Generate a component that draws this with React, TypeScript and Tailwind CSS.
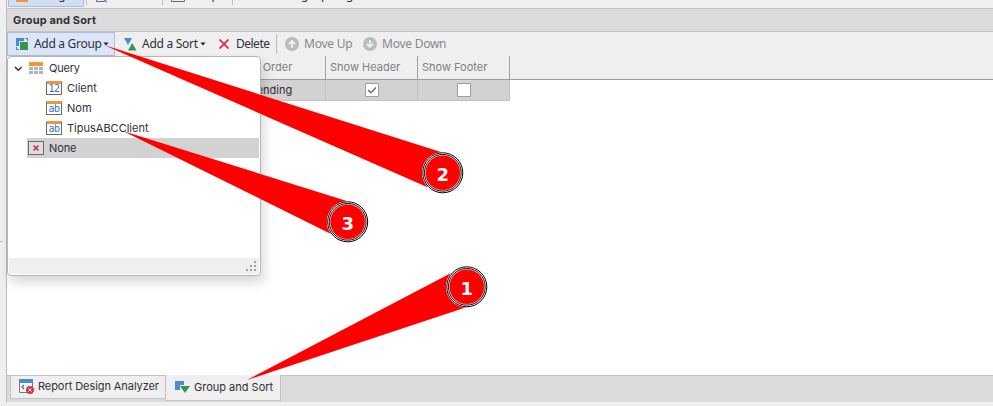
import React from "react";

function GroupIcon() {
  return (
    <svg width="13" height="13" viewBox="0 0 13 13" shapeRendering="crispEdges">
      <path d="M0 0h8v3H3v5H0z" fill="#4a8bd0" />
      <path d="M9 0h3v3h-1V1H9zM0 9h1v2h2v1H0z" fill="#777780" />
      <rect x="4" y="4" width="8" height="8" fill="#35964f" />
    </svg>
  );
}

function TableIcon() {
  return (
    <svg width="15" height="12" viewBox="0 0 15 12" shapeRendering="crispEdges">
      <rect width="14" height="4" fill="#f3953b" />
      <path d="M0 5h4v3H0zM5 5h4v3H5zM10 5h4v3h-4zM0 9h4v3H0zM5 9h4v3H5zM10 9h4v3h-4z" fill="#b3b3b8" />
    </svg>
  );
}

function FieldIcon({ label }: { label: string }) {
  return (
    <span className="flex h-[14px] w-4 shrink-0 items-center justify-center border border-t-[3px] border-[#6b6b76] border-t-[#f3953b] bg-white font-['DejaVu_Sans_Mono',monospace] text-[10px] leading-none tracking-[-0.5px] text-[#3474be]">
      {label}
    </span>
  );
}

function Move({ down = false }: { down?: boolean }) {
  return (
    <svg width="14" height="14" viewBox="0 0 14 14">
      <circle cx="7" cy="7" r="7" fill="#bcbcbc" />
      <path d="M7 11V4M3.8 7.2 7 4l3.2 3.2" fill="none" stroke="#f2f2f2" strokeWidth="1.8" transform={down ? "rotate(180 7 7)" : undefined} />
    </svg>
  );
}

function Callout({ x, y, n }: { x: number; y: number; n: string }) {
  return (
    <g>
      <circle cx={x} cy={y} r="20.9" fill="#fff" />
      <circle cx={x} cy={y} r="20" fill="#fff" stroke="#000" strokeWidth="1" />
      <circle cx={x} cy={y} r="17.7" fill="red" stroke="#ffc8c8" strokeWidth="0.8" />
      <circle cx={x} cy={y} r="18.4" fill="none" stroke="#000" strokeWidth="0.9" />
      <text x={x} y={y + 7.7} textAnchor="middle" fill="#fff" className="font-['DejaVu_Sans',sans-serif] text-[18px] font-bold">{n}</text>
    </g>
  );
}

const fields = [
  { icon: "12", name: "Client" },
  { icon: "ab", name: "Nom" },
  { icon: "ab", name: "TipusABCClient" },
];

function GroupMenu() {
  return (
    <div className="absolute left-[7px] top-[56px] flex h-[220px] w-[254px] flex-col rounded-[4px] border border-[#b5b5b5] bg-white p-px text-[11px] text-[#303038] shadow-[3px_7px_12px_rgba(0,0,0,0.15)]">
      <div className="flex h-5 items-center pl-[5px]">
        <svg width="9" height="6" viewBox="0 0 9 6" className="mr-[6px] mt-px"><path d="m1 1 3.3 3.3L7.6 1" fill="none" stroke="#333" strokeWidth="1.5" /></svg>
        <TableIcon />
        <span className="ml-[5px] tracking-[-0.2px]">Query</span>
      </div>
      {fields.map((f) => (
        <div key={f.name} className="flex h-5 items-center pl-[37px]">
          <FieldIcon label={f.icon} />
          <span className="ml-[5px]">{f.name}</span>
        </div>
      ))}
      <div className="ml-[18px] flex h-5 items-center bg-[#d2d2d2] pl-px">
        <svg width="16" height="14" viewBox="0 0 16 14">
          <rect x=".5" y=".5" width="15" height="13" fill="#dedee0" stroke="#6b6b76" />
          <path d="m5.5 4.5 5 5m0-5-5 5" stroke="#d1344b" strokeWidth="1.7" />
        </svg>
        <span className="ml-[5px] tracking-[-0.1px]">None</span>
      </div>
      <div className="mt-auto flex h-4 items-end justify-end bg-[#efefef] pb-[3px] pr-[2px]">
        <svg width="11" height="10" viewBox="0 0 11 10" fill="#a0a0a0" shapeRendering="crispEdges">
          <path d="M8 0h2v2H8zM4 4h2v2H4zM8 4h2v2H8zM0 8h2v2H0zM4 8h2v2H4zM8 8h2v2H8z" />
        </svg>
      </div>
    </div>
  );
}

function RibbonEdge() {
  return (
    <svg width="400" height="8" viewBox="7 0 400 8" className="block" fill="#303038">
      <path d="M8.5-1v7.5h75V-1" fill="#d0dff6" stroke="#aebcd8" />
      <path d="M16 0h12v2H16z" fill="#f3953b" />
      <path d="M86.5 0v5M162.5 0v5M232.5 0v5" stroke="#c0c0c0" />
      <path d="M96.5-1v2.5h8M171.5-1v2.5h13V-1" fill="none" stroke="#6b6b76" />
      <path d="m104 0 3 2" stroke="#4a8bd0" strokeWidth="1.5" />
      <g className="font-['Noto_Sans',sans-serif] text-[12px]">
        <text x="34" y="-1">Design</text>
        <text x="191" y="-1">Script</text>
        <text x="301" y="-1">g</text>
        <text x="321" y="-1">p</text>
        <text x="346" y="-1">g</text>
      </g>
    </svg>
  );
}

export default function App() {
  return (
    <div className="relative h-[406px] w-[993px] overflow-hidden bg-[#efefef] pl-[6px] font-['Inter',sans-serif] text-[#303038]">
      <div className="flex h-[402px] flex-col border-l border-[#bcbcbc]">
        <div className="h-2 shrink-0 overflow-hidden">
          <RibbonEdge />
        </div>
        <div className="flex h-6 shrink-0 items-center border-y border-[#c4c4c4] bg-[#dbdbdb] pl-[6px] text-[11px] font-bold tracking-[0.15px]">Group and Sort</div>
        <div className="flex h-6 shrink-0 items-center font-['Noto_Sans',sans-serif] text-[12px] leading-none">
          <div className="flex h-6 w-[108px] items-center border border-[#aebcd8] bg-[#dbe6f9] pl-2">
            <GroupIcon />
            <span className="ml-[5px] w-[69px] whitespace-nowrap tracking-[-0.3px]">Add a Group</span>
            <svg width="6" height="4" viewBox="0 0 6 4"><path d="M.5.5h5L3 3.5z" fill="#222" /></svg>
          </div>
          <div className="ml-[9px] flex w-[95px] items-center">
            <svg width="13" height="13" viewBox="0 0 13 13"><path d="M0 0h8L4 7z" fill="#4a8bd0" /><path d="M4 12.5h8.5L8.2 5z" fill="#35964f" /></svg>
            <span className="ml-[5px] w-[58px] whitespace-nowrap tracking-[-0.27px]">Add a Sort</span>
            <svg width="6" height="4" viewBox="0 0 6 4"><path d="M.5.5h5L3 3.5z" fill="#222" /></svg>
          </div>
          <svg width="10" height="10" viewBox="0 0 10 10"><path d="m.5.5 9 9m0-9-9 9" stroke="#d1344b" strokeWidth="1.9" /></svg>
          <span className="ml-[7px] w-[40px] tracking-[-0.5px]">Delete</span>
          <span className="h-5 w-px bg-[#bcbcbc]" />
          <div className="ml-2 flex w-[78px] items-center text-[#88888c]"><Move /><span className="ml-[5px] whitespace-nowrap tracking-[-0.25px]">Move Up</span></div>
          <div className="flex items-center text-[#88888c]"><Move down /><span className="ml-[5px] whitespace-nowrap tracking-[-0.25px]">Move Down</span></div>
        </div>
        <div className="flex h-6 shrink-0 border-b border-[#9c9c9c] text-[11px] text-[#808084]">
          <div className="w-[227px] border-r border-[#a0a0a0]" />
          <div className="flex w-[92px] items-center border-r border-[#a0a0a0] pl-[4px]">Sort Order</div>
          <div className="flex w-[92px] items-center border-r border-[#a0a0a0] pl-[4px]">Show Header</div>
          <div className="flex w-[92px] items-center border-r border-[#a0a0a0] pl-[4px]">Show Footer</div>
        </div>
        <div className="min-h-0 flex-1 bg-white">
          <div className="flex h-[21px] w-[503px] border-b border-[#c2c2c2] bg-[#d2d2d2] text-[11px]">
            <div className="w-[227px] border-r border-[#c2c2c2]" />
            <div className="flex w-[92px] items-center border-r border-[#c2c2c2] pl-[3px]">Ascending</div>
            <div className="flex w-[92px] items-center justify-center border-r border-[#c2c2c2]">
              <svg width="14" height="14" viewBox="0 0 14 14"><path d="M.5.5h13v13H.5z" fill="#fff" stroke="#a0a0a0" /><path d="m3 7 2.8 2.8L11 4.6" fill="none" stroke="#666" strokeWidth="1.4" /></svg>
            </div>
            <div className="flex w-[92px] items-center justify-center border-r border-[#c2c2c2]">
              <div className="h-[14px] w-[14px] border border-[#a0a0a0] bg-white" />
            </div>
          </div>
        </div>
        <div className="flex h-[27px] shrink-0 border-t border-[#c2c2c2] bg-[#dbdbdb] pl-[3px] text-[11px]">
          <div className="flex h-[23px] w-[156px] items-center border border-t-0 border-[#c2c2c2] bg-[#efefef] pl-2">
            <svg width="16" height="16" viewBox="0 0 16 16"><path d="M.5 1v12.5h13V1" fill="#f4f4f4" stroke="#777780" /><path d="M0 0h14v4H0z" fill="#4a8bd0" /><path d="M5 6 3 8l2 2" fill="none" stroke="#666" strokeWidth="1.3" /><circle cx="11" cy="11" r="4" fill="#d1344b" /><path d="m9.5 9.5 3 3m0-3-3 3" stroke="#fff" /></svg>
            <span className="mb-[2px] ml-[3px] whitespace-nowrap tracking-[-0.07px]">Report Design Analyzer</span>
          </div>
          <div className="-mt-px flex h-[26px] w-[115px] items-center border-b border-r border-[#c2c2c2] bg-[#efefef] pl-[9px]">
            <svg width="15" height="13" viewBox="0 0 15 13"><path d="M0 0h9v4H5v5H0z" fill="#4a8bd0" /><path d="M5 5h10l-5 7z" fill="#35964f" /></svg>
            <span className="ml-[4px] whitespace-nowrap">Group and Sort</span>
          </div>
        </div>
      </div>
      <GroupMenu />
      <svg width="993" height="406" className="absolute left-0 top-0">
        <path d="M0 241.5h3" stroke="#bcbcbc" />
        <path d="M104 45 444 153 427 187zM123 131 350 202 331 234zM247 380 453 272 467 307z" fill="red" />
        <Callout x={442.8} y={172.8} n="2" />
        <Callout x={347.7} y={221.8} n="3" />
        <Callout x={466.8} y={286.8} n="1" />
      </svg>
    </div>
  );
}
